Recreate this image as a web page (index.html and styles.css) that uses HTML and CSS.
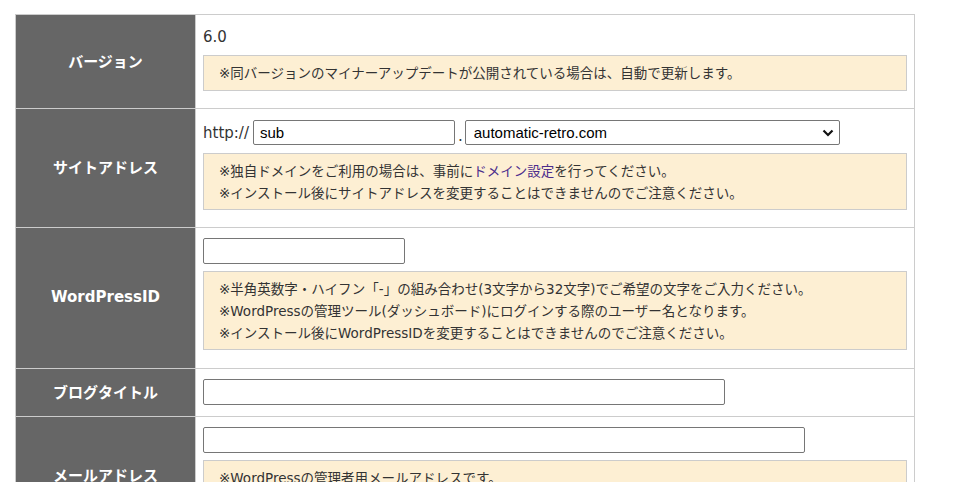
FILE: index.html
```html
<!DOCTYPE html>
<html lang="ja">
<head>
<meta charset="utf-8">
<title>WordPress インストール</title>
<link rel="stylesheet" href="styles.css">
</head>
<body>
<div class="page">
  <table class="form-table">
    <tr>
      <th>バージョン</th>
      <td class="cell-version">
        <div class="value">6.0</div>
        <div class="note note-first">※同バージョンのマイナーアップデートが公開されている場合は、自動で更新します。</div>
      </td>
    </tr>
    <tr>
      <th>サイトアドレス</th>
      <td>
        <div class="url-row">
          <span class="scheme">http://</span>
          <input class="field field-sub" type="text" value="sub">
          <span class="dot">.</span>
          <span class="select-wrap">
            <select class="select">
              <option>automatic-retro.com</option>
            </select>
            <svg class="chevron" width="12" height="8" viewBox="0 0 12 8"><path d="M1.5 1.5 L6 6 L10.5 1.5" fill="none" stroke="#111" stroke-width="2.2"/></svg>
          </span>
        </div>
        <div class="note">※独自ドメインをご利用の場合は、事前に<a class="link" href="#">ドメイン設定</a>を行ってください。<br>※インストール後にサイトアドレスを変更することはできませんのでご注意ください。</div>
      </td>
    </tr>
    <tr>
      <th>WordPressID</th>
      <td>
        <input class="field field-id" type="text">
        <div class="note note-tall">※半角英数字・ハイフン「-」の組み合わせ(3文字から32文字)でご希望の文字をご入力ください。<br>※WordPressの管理ツール(ダッシュボード)にログインする際のユーザー名となります。<br>※インストール後にWordPressIDを変更することはできませんのでご注意ください。</div>
      </td>
    </tr>
    <tr>
      <th>ブログタイトル</th>
      <td>
        <input class="field field-title" type="text">
      </td>
    </tr>
    <tr>
      <th>メールアドレス</th>
      <td>
        <input class="field field-mail" type="text">
        <div class="note">※WordPressの管理者用メールアドレスです。<br>※インストール完了後、こちらのメールアドレスにお知らせが届きます。</div>
      </td>
    </tr>
  </table>
</div>
</body>
</html>
```
FILE: styles.css
```css
html, body {
  margin: 0;
  padding: 0;
  background: #fff;
}
body {
  font-family: "DejaVu Sans", "Noto Sans CJK JP", sans-serif;
  color: #333;
  font-size: 15px;
}
.page {
  padding: 14px 0 0 15px;
}
.form-table {
  width: 900px;
  border-collapse: collapse;
  border: 1px solid #ccc;
}
.form-table th {
  width: 179px;
  padding: 0 0 3px;
  background: #666;
  color: #fff;
  border: 1px solid #ccc;
  font-size: 15px;
  font-weight: bold;
  text-align: center;
  vertical-align: middle;
  font-family: "DejaVu Sans", "Noto Sans CJK JP", sans-serif;
}
.form-table td {
  padding: 10px 7px 11px 7px;
  border: 1px solid #ccc;
  vertical-align: top;
}
.form-table td.cell-version {
  padding-top: 12px;
}
.value {
  line-height: 20px;
  font-size: 15px;
}
.note {
  margin: 7px 0 6px;
  padding: 6px 15px 5px;
  background: #fdefd3;
  border: 1px solid #ccc;
  font-size: 13.5px;
  line-height: 22px;
  color: #333;
}
.note-first {
  margin-top: 8px;
  padding-bottom: 6px;
}
.note-tall {
  margin-bottom: 7px;
}
.link {
  color: #4b2c8c;
  text-decoration: none;
}
.url-row {
  display: flex;
  align-items: center;
  height: 27px;
}
.scheme {
  margin-right: 4px;
}
.dot {
  margin: 0 2px 0 3px;
  align-self: flex-end;
  line-height: 20px;
}
.field {
  display: block;
  box-sizing: border-box;
  height: 26px;
  margin: 0;
  padding: 1px 6px;
  border: 1px solid #767676;
  border-radius: 2px;
  background: #fff;
  font-family: "Liberation Sans", Arial, sans-serif;
  font-size: 15px;
  color: #000;
}
.field-sub { width: 202px; height: 25px; }
.field-id { width: 202px; }
.field-title { width: 522px; }
.field-mail { width: 602px; }
.select-wrap {
  position: relative;
  display: block;
}
.select {
  display: block;
  box-sizing: border-box;
  width: 375px;
  height: 25px;
  margin: 0;
  padding: 0 24px 0 8px;
  border: 1px solid #767676;
  border-radius: 2px;
  background: #fff;
  font-family: "Liberation Sans", Arial, sans-serif;
  font-size: 15px;
  color: #000;
  -webkit-appearance: none;
  appearance: none;
}
.chevron {
  position: absolute;
  right: 6px;
  top: 9px;
  pointer-events: none;
}
```
